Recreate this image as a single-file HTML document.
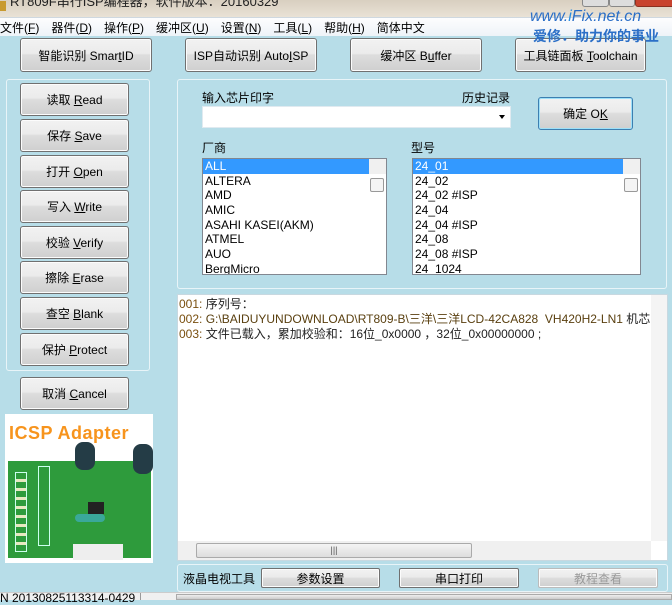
<!DOCTYPE html>
<html><head><meta charset="utf-8"><style>
*{box-sizing:border-box;margin:0;padding:0}
body{width:672px;height:600px;overflow:hidden;background:#b7dde8;font-family:"Liberation Sans","Noto Sans CJK SC",sans-serif;font-size:12px;color:#000;position:relative}
.a{position:absolute}
.btn{position:absolute;border:1px solid #707070;border-radius:3px;background:linear-gradient(#f2f2f2 0%,#ebebeb 45%,#dddddd 50%,#cfcfcf 100%);display:flex;align-items:center;justify-content:center;font-size:12px;color:#000;box-shadow:inset 0 0 0 1px #fcfcfc;white-space:pre}
.grp{position:absolute;border:1px solid #e8f4f8;border-radius:3px}
.list{position:absolute;background:#fff;border:1px solid #828790;font-size:12px;line-height:14.7px}
.list div{padding-left:2px;height:14.7px}
.sel{background:#3399ff;color:#fff}
.vs{position:absolute;right:0;top:0;bottom:0;width:17px;background:#f0f0f0}
u{text-decoration:underline}
</style></head><body>
<div class="a" style="left:0;top:0;width:672px;height:17px;background:linear-gradient(#d8cfc0,#e9e2d6)"></div>
<div class="a" style="top:-9px;font-size:13px;color:#222;left:10px">RT809F串行ISP编程器，软件版本：20160329</div>
<div class="a" style="left:0;top:1px;width:6px;height:10px;background:#c89a30"></div>
<div class="a" style="left:582px;top:-4px;width:27px;height:11px;border:1px solid #888;border-radius:3px;background:#ddd"></div>
<div class="a" style="left:609px;top:-4px;width:26px;height:11px;border:1px solid #888;border-radius:3px;background:#ddd"></div>
<div class="a" style="left:635px;top:-4px;width:40px;height:11px;border:1px solid #8a3020;border-radius:3px;background:#c8432e"></div>
<div class="a" style="left:0;top:17px;width:672px;height:19px;background:linear-gradient(#fdfdfe,#eef3f8);border-top:1px solid #cfd8e0"></div>
<div class="a" style="left:0;top:19px;font-size:12px;white-space:nowrap">
<span style="margin-right:12px">文件(<u>F</u>)</span><span style="margin-right:12px">器件(<u>D</u>)</span><span style="margin-right:12px">操作(<u>P</u>)</span><span style="margin-right:12px">缓冲区(<u>U</u>)</span><span style="margin-right:12px">设置(<u>N</u>)</span><span style="margin-right:12px">工具(<u>L</u>)</span><span style="margin-right:12px">帮助(<u>H</u>)</span><span>简体中文</span></div>

<div class="btn" style="left:20px;top:38px;width:132px;height:34px"><span>智能识别 Smar<u>t</u>ID</span></div>
<div class="btn" style="left:185px;top:38px;width:132px;height:34px"><span>ISP自动识别 Auto<u>I</u>SP</span></div>
<div class="btn" style="left:350px;top:38px;width:132px;height:34px"><span>缓冲区 B<u>u</u>ffer</span></div>
<div class="btn" style="left:515px;top:38px;width:131px;height:34px"><span>工具链面板 <u>T</u>oolchain</span></div>
<div class="a" style="left:530px;top:8px;color:#2b6fc7;font-size:16px;font-style:italic;white-space:nowrap;z-index:5">www.<span style="color:#2b8fe0">i</span>Fix.net.cn</div>
<div class="a" style="left:533px;top:26px;color:#2b6fc7;font-size:14px;font-weight:bold;white-space:nowrap;z-index:5">爱修．助力你的事业</div>

<div class="grp" style="left:6px;top:79px;width:144px;height:292px"></div>
<div class="btn" style="left:20px;top:83px;width:109px;height:33px"><span>读取 <u>R</u>ead</span></div>
<div class="btn" style="left:20px;top:119px;width:109px;height:33px"><span>保存 <u>S</u>ave</span></div>
<div class="btn" style="left:20px;top:155px;width:109px;height:33px"><span>打开 <u>O</u>pen</span></div>
<div class="btn" style="left:20px;top:190px;width:109px;height:33px"><span>写入 <u>W</u>rite</span></div>
<div class="btn" style="left:20px;top:226px;width:109px;height:33px"><span>校验 <u>V</u>erify</span></div>
<div class="btn" style="left:20px;top:261px;width:109px;height:33px"><span>擦除 <u>E</u>rase</span></div>
<div class="btn" style="left:20px;top:297px;width:109px;height:33px"><span>查空 <u>B</u>lank</span></div>
<div class="btn" style="left:20px;top:333px;width:109px;height:33px"><span>保护 <u>P</u>rotect</span></div>
<div class="btn" style="left:20px;top:377px;width:109px;height:33px"><span>取消 <u>C</u>ancel</span></div>

<div class="a" style="left:5px;top:414px;width:148px;height:149px;background:#fff;overflow:hidden">
<div class="a" style="left:4px;top:9px;color:#f7941d;font-weight:bold;font-size:18px;white-space:nowrap;letter-spacing:0.5px">ICSP Adapter</div>
<div class="a" style="left:3px;top:47px;width:143px;height:97px;background:#2e9b3c"></div>
<div class="a" style="left:10px;top:58px;width:12px;height:80px;border:1px solid #cfe;background:repeating-linear-gradient(#2e9b3c 0 6px,#e8e8c0 6px 9px)"></div>
<div class="a" style="left:33px;top:52px;width:12px;height:80px;border:1px solid #cfe"></div>
<div class="a" style="left:70px;top:28px;width:20px;height:28px;border-radius:8px;background:#243c46"></div>
<div class="a" style="left:128px;top:30px;width:20px;height:30px;border-radius:8px;background:#243c46"></div>
<div class="a" style="left:70px;top:100px;width:30px;height:8px;background:#3aa89a;border-radius:4px"></div>
<div class="a" style="left:68px;top:130px;width:50px;height:16px;background:#eee"></div>
<div class="a" style="left:83px;top:88px;width:16px;height:12px;background:#222"></div>
</div>

<div class="grp" style="left:177px;top:79px;width:490px;height:210px"></div>
<div class="a" style="left:202px;top:89px">输入芯片印字</div>
<div class="a" style="left:462px;top:89px">历史记录</div>
<div class="a" style="left:202px;top:106px;width:309px;height:22px;background:#fff;border:1px solid #e0eaf0"></div>
<div class="a" style="left:499px;top:115px;width:0;height:0;border-left:3.5px solid transparent;border-right:3.5px solid transparent;border-top:4px solid #000"></div>
<div class="btn" style="left:538px;top:97px;width:95px;height:33px;border-color:#3c7fb1;box-shadow:inset 0 0 0 1px #9ee0f8"><span>确定 O<u>K</u></span></div>
<div class="a" style="left:202px;top:139px">厂商</div>
<div class="a" style="left:411px;top:139px">型号</div>
<div class="list" style="left:202px;top:158px;width:185px;height:117px;overflow:hidden">
<div class="sel" style="margin-right:17px">ALL</div><div>ALTERA</div><div>AMD</div><div>AMIC</div><div>ASAHI KASEI(AKM)</div><div>ATMEL</div><div>AUO</div><div>BergMicro</div>
<div class="vs"><div class="a" style="left:1px;top:19px;width:14px;height:14px;border:1px solid #999;background:#f4f4f4;border-radius:2px"></div></div></div>
<div class="list" style="left:412px;top:158px;width:229px;height:117px;overflow:hidden">
<div class="sel" style="margin-right:17px">24_01</div><div>24_02</div><div>24_02 #ISP</div><div>24_04</div><div>24_04 #ISP</div><div>24_08</div><div>24_08 #ISP</div><div>24_1024</div>
<div class="vs"><div class="a" style="left:1px;top:19px;width:14px;height:14px;border:1px solid #999;background:#f4f4f4;border-radius:2px"></div></div></div>

<div class="a" style="left:177px;top:294px;width:491px;height:267px;background:#fff;border:1px solid #c8d8e0"></div>
<div class="a" style="left:651px;top:295px;width:16px;height:246px;background:#f4f4f4"></div>
<div class="a" style="left:178px;top:541px;width:473px;height:19px;background:#f0f0f0"></div>
<div class="a" style="left:196px;top:543px;width:276px;height:15px;border:1px solid #aaa;border-radius:2px;background:linear-gradient(#f4f4f4,#ddd);text-align:center;font-size:9px;line-height:13px;color:#555">|||</div>
<div class="a" style="left:179px;top:297px;line-height:15px;font-size:12px;white-space:nowrap;color:#222">
<div><span style="color:#7a5010">001:</span> 序列号：</div>
<div><span style="color:#7a5010">002:</span> <span style="color:#5a4010">G:\BAIDUYUNDOWNLOAD\RT809-B\三洋\三洋LCD-42CA828&nbsp; VH420H2-LN1</span> 机芯</div>
<div><span style="color:#7a5010">003:</span> 文件已载入，累加校验和：16位_0x0000 ，32位_0x00000000 ;</div></div>

<div class="grp" style="left:177px;top:564px;width:491px;height:28px"></div>
<div class="a" style="left:183px;top:570px">液晶电视工具</div>
<div class="btn" style="left:261px;top:568px;width:119px;height:20px;border-radius:2px">参数设置</div>
<div class="btn" style="left:399px;top:568px;width:120px;height:20px;border-radius:2px">串口打印</div>
<div class="btn" style="left:538px;top:568px;width:120px;height:20px;border-radius:2px;color:#999;border-color:#bbb">教程查看</div>

<div class="a" style="left:0;top:592px;width:672px;height:8px;background:#f0f0f0;border-top:1px solid #ccc"></div>
<div class="a" style="left:0;top:591px;font-size:12px;white-space:nowrap;line-height:14px">N 20130825113314-0429</div>
<div class="a" style="left:140px;top:593px;width:1px;height:7px;background:#999"></div>
<div class="a" style="left:176px;top:594px;width:496px;height:6px;background:linear-gradient(#eee,#ccc);border:1px solid #aaa"></div>
</body></html>
